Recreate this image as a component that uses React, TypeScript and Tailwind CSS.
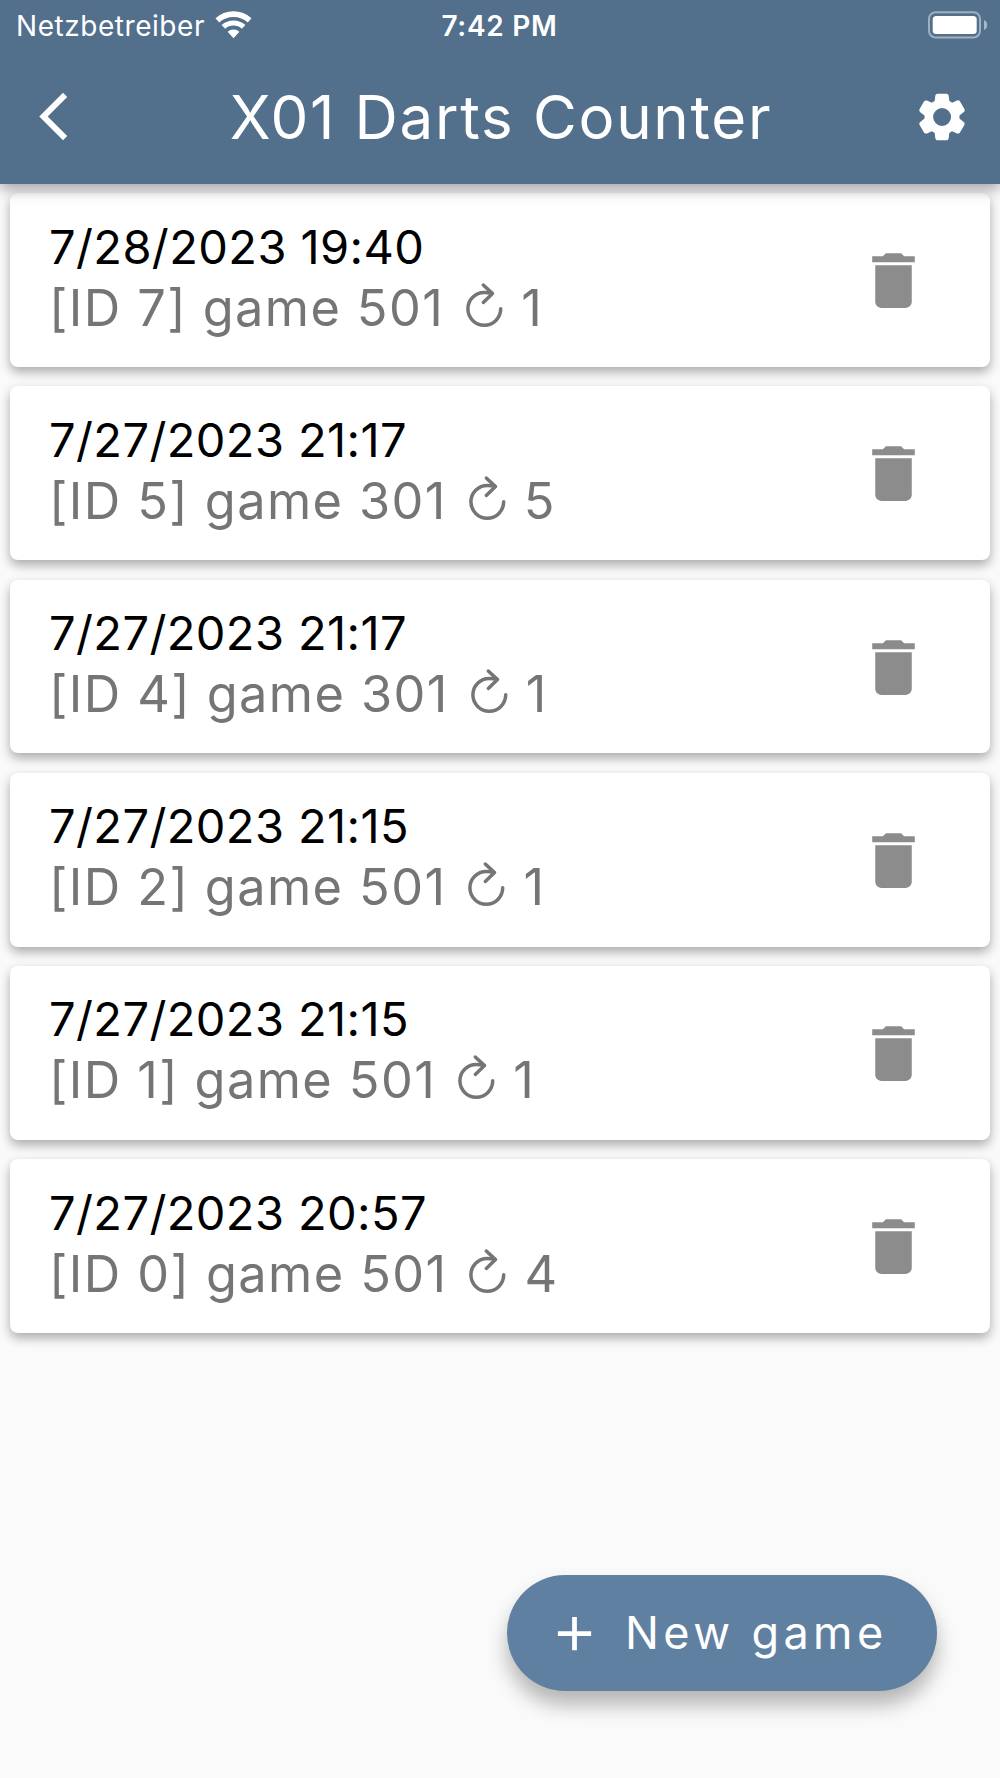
import { MdAdd, MdArrowBackIosNew, MdDelete } from "react-icons/md";

type Game = {
  id: number;
  date: string;
  mode: number;
  rounds: number;
};

const games: Game[] = [
  { id: 7, date: "7/28/2023 19:40", mode: 501, rounds: 1 },
  { id: 5, date: "7/27/2023 21:17", mode: 301, rounds: 5 },
  { id: 4, date: "7/27/2023 21:17", mode: 301, rounds: 1 },
  { id: 2, date: "7/27/2023 21:15", mode: 501, rounds: 1 },
  { id: 1, date: "7/27/2023 21:15", mode: 501, rounds: 1 },
  { id: 0, date: "7/27/2023 20:57", mode: 501, rounds: 4 },
];

function WifiIcon() {
  return (
    <svg viewBox="0 0 37 28" className="ml-[10px] h-[28px] w-[37px]" fill="none" stroke="currentColor">
      <path d="M2.35 9.4a23.9 23.9 0 0 1 32.3 0" strokeWidth="5.6" />
      <path d="M8.36 15.95a15 15 0 0 1 20.28 0" strokeWidth="5.2" />
      <path d="M18.5 27.2l-5.9-6.4a8.7 8.7 0 0 1 11.8 0z" fill="currentColor" stroke="none" />
    </svg>
  );
}

function BatteryIcon() {
  return (
    <svg viewBox="0 0 60 28" className="h-[28px] w-[60px]" fill="none">
      <rect x="1" y="1.2" width="51" height="25.2" rx="6.5" stroke="white" strokeOpacity="0.45" strokeWidth="2" />
      <rect x="4.7" y="4.9" width="44" height="18" rx="3.5" fill="white" />
      <path d="M56 9v10c2-.9 3.2-2.8 3.2-5S58 9.9 56 9z" fill="white" fillOpacity="0.5" />
    </svg>
  );
}

function GearIcon() {
  return (
    <svg viewBox="0 0 24 24" className="h-[56px] w-[56px]" fill="currentColor">
      <path d="M19.5 12c0-.23-.01-.45-.03-.68l1.86-1.41c.4-.3.51-.86.26-1.3l-1.87-3.23a.987.987 0 0 0-1.25-.42l-2.15.91c-.37-.26-.76-.49-1.17-.68l-.29-2.31c-.06-.5-.49-.88-.99-.88h-3.73c-.51 0-.94.38-1 .88l-.29 2.31c-.41.19-.8.42-1.17.68l-2.15-.91c-.46-.2-1-.02-1.25.42L2.41 8.62c-.25.44-.14.99.26 1.3l1.86 1.41a7.343 7.343 0 0 0 0 1.35l-1.86 1.41c-.4.3-.51.86-.26 1.3l1.87 3.23c.25.44.79.62 1.25.42l2.15-.91c.37.26.76.49 1.17.68l.29 2.31c.06.5.49.88.99.88h3.73c.5 0 .93-.38.99-.88l.29-2.31c.41-.19.8-.42 1.17-.68l2.15.91c.46.2 1 .02 1.25-.42l1.87-3.23c.25-.44.14-.99-.26-1.3l-1.86-1.41c.03-.23.04-.45.04-.68zm-7.46 3.85a3.85 3.85 0 1 1 0-7.7 3.85 3.85 0 0 1 0 7.7z" />
    </svg>
  );
}

function RoundsIcon() {
  return (
    <svg viewBox="0 0 38 46" className="h-[46px] w-[38px]" fill="none" stroke="currentColor" strokeWidth="3.5" strokeLinecap="round" strokeLinejoin="round">
      <path d="M35.7 26.8A16.4 16.4 0 1 1 19.3 10.4q4 0 7.7 1" />
      <path d="M18.3 3l9.2 8.6-9.2 8.8" />
    </svg>
  );
}

function GameCard({ game }: { game: Game }) {
  return (
    <div className="flex h-[173.7px] items-center justify-between rounded-lg bg-white pt-px pr-[60px] pl-[39px] shadow-[0_5px_11px_rgba(0,0,0,0.32)]">
      <div className="-mt-[6px]">
        <div className="text-[47px] leading-[60px] tracking-[0.4px] text-black">{game.date}</div>
        <div className="flex text-[50.5px] leading-[62px] tracking-[1.4px] text-[#757575]">
          <span>[ID {game.id}] game {game.mode}</span>
          <span className="mr-[18px] ml-[21px] flex items-start pt-[5px]"><RoundsIcon /></span>
          <span>{game.rounds}</span>
        </div>
      </div>
      <MdDelete className="h-[73px] w-[73px] text-[#8c8c8c]" />
    </div>
  );
}

export default function App() {
  return (
    <div className="relative flex h-[1778px] w-[1000px] flex-col bg-[#fafafa] font-[Inter,sans-serif]">
      <header className="relative z-10 h-[183.5px] bg-[#526f8c] text-white shadow-[0_5px_14px_rgba(0,0,0,0.36)]">
        <div className="grid h-[50px] grid-cols-3 items-center pr-[12px] pl-[16px]">
          <div className="flex items-center text-[28px] tracking-[0.55px]">
            <span className="pt-px">Netzbetreiber</span>
            <WifiIcon />
          </div>
          <div className="pt-px pr-[5px] text-center text-[28px] font-semibold tracking-[0.7px]">7:42 PM</div>
          <div className="flex justify-end"><BatteryIcon /></div>
        </div>
        <div className="flex h-[133px] items-center justify-between pr-[30px] pl-[25px]">
          <MdArrowBackIosNew className="h-[57px] w-[57px]" />
          <h1 className="pl-[6px] text-[60px] leading-none tracking-[1.7px]">X01 Darts Counter</h1>
          <GearIcon />
        </div>
      </header>

      <main className="flex flex-col gap-[19.5px] px-[10px] pt-[9.8px]">
        {games.map((game) => (
          <GameCard key={game.id} game={game} />
        ))}
      </main>

      <button className="absolute top-[1575px] left-[507px] flex h-[116px] w-[430px] items-center rounded-full bg-[#6080a2] pl-[39px] text-white shadow-[0_14px_20px_rgba(0,0,0,0.28)]">
        <MdAdd className="h-[57px] w-[57px]" />
        <span className="ml-[22px] text-[45px] tracking-[4.4px]">New game</span>
      </button>
    </div>
  );
}
